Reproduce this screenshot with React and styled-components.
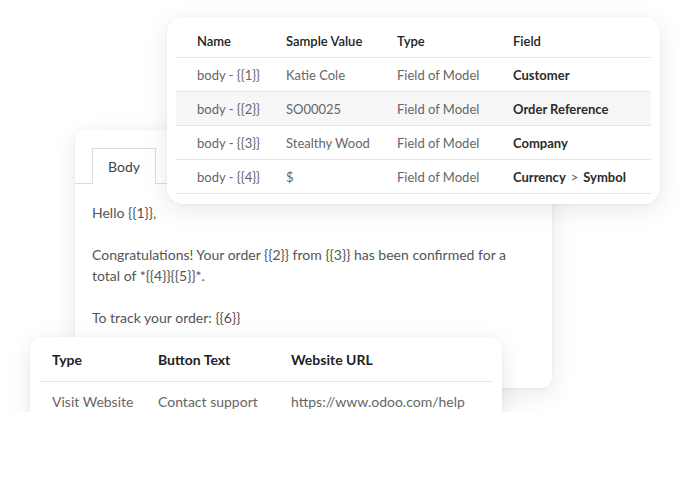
import React from 'react';
import styled, { createGlobalStyle } from 'styled-components';

const GlobalStyle = createGlobalStyle`
  html, body {
    margin: 0;
    padding: 0;
    background: #fff;
  }
  body {
    font-family: Lato, "Noto Sans", sans-serif;
    -webkit-font-smoothing: antialiased;
  }
`;

const Stage = styled.div`
  position: relative;
  width: 690px;
  height: 412px;
  overflow: hidden;
  background: #fff;
`;

const Card = styled.div`
  position: absolute;
  left: ${p => p.x}px;
  top: ${p => p.y}px;
  width: ${p => p.w}px;
  height: ${p => p.h}px;
  z-index: ${p => p.z};
  background: #fff;
  border-radius: 14px;
  box-shadow: 0 6px 26px rgba(0, 0, 0, 0.09), 0 1px 4px rgba(0, 0, 0, 0.04);
  box-sizing: border-box;
`;

const VarCard = styled(Card)`
  border-radius: 16px;
  padding: 7px 9px 10px;
`;

const BodyCard = styled(Card)`
  border-radius: 10px;
  padding: 18px 17px 0 0;
  display: flex;
  flex-direction: column;
`;

const ButtonCard = styled(Card)`
  border-radius: 12px;
  padding: 0 9px;
`;

const Table = styled.div`
  display: grid;
  grid-template-columns: ${p => p.cols};
  color: #666;
  font-size: 13px;
`;

const HeadCell = styled.div`
  box-sizing: border-box;
  height: ${p => p.h}px;
  display: flex;
  align-items: center;
  padding-left: ${p => p.pad}px;
  border-bottom: 1px solid #e6e6e6;
  color: #222;
  font-weight: ${p => p.weight};
  font-size: ${p => p.size}px;
`;

const Cell = styled.div`
  box-sizing: border-box;
  height: ${p => p.h}px;
  display: flex;
  align-items: center;
  padding-left: ${p => p.pad}px;
  border-bottom: ${p => (p.last ? 'none' : '1px solid #e6e6e6')};
  background: ${p => (p.striped ? '#f7f7f7' : 'transparent')};
  color: ${p => (p.strong ? '#2b2b2b' : '#666')};
  font-weight: ${p => (p.strong ? 700 : 400)};
  font-size: ${p => p.size}px;
  white-space: nowrap;
`;

const Chevron = styled.span`
  font-weight: 400;
  color: #555;
  margin: 0 5px;
`;

const TabBar = styled.div`
  display: flex;
  border-bottom: 1px solid #dcdcdc;
  padding-left: 17px;
`;

const Tab = styled.div`
  width: 64px;
  height: 36px;
  box-sizing: border-box;
  display: flex;
  align-items: center;
  justify-content: center;
  border: 1px solid #dcdcdc;
  border-bottom: none;
  margin-bottom: -1px;
  background: #fff;
  color: #444;
  font-size: 14px;
`;

const Message = styled.div`
  padding: 18px 0 0 17px;
  color: #555;
  font-size: 14px;
  line-height: 21px;
`;

const Para = styled.p`
  margin: 0 0 21px;
`;

const variables = [
  ['body - {{1}}', 'Katie Cole', 'Field of Model', ['Customer']],
  ['body - {{2}}', 'SO00025', 'Field of Model', ['Order Reference']],
  ['body - {{3}}', 'Stealthy Wood', 'Field of Model', ['Company']],
  ['body - {{4}}', '$', 'Field of Model', ['Currency', 'Symbol']],
];

const buttonCols = [
  ['Type', 'Visit Website', 13],
  ['Button Text', 'Contact support', 0],
  ['Website URL', 'https://www.odoo.com/help', 0],
];

function FieldPath({ parts }) {
  return parts.map((part, i) => (
    <React.Fragment key={part}>
      {i > 0 && <Chevron>&gt;</Chevron>}
      {part}
    </React.Fragment>
  ));
}

function VariablesTable() {
  return (
    <VarCard x={167} y={17} w={493} h={187} z={2}>
      <Table cols="89px 111px 116px 1fr">
        {['Name', 'Sample Value', 'Type', 'Field'].map(h => (
          <HeadCell key={h} h={34} pad={21} weight={600} size={13}>{h}</HeadCell>
        ))}
        {variables.map((row, r) => (
          <React.Fragment key={row[0]}>
            <Cell h={34} pad={21} size={13} striped={r === 1}>{row[0]}</Cell>
            <Cell h={34} pad={21} size={13} striped={r === 1}>{row[1]}</Cell>
            <Cell h={34} pad={21} size={13} striped={r === 1}>{row[2]}</Cell>
            <Cell h={34} pad={21} size={13} striped={r === 1} strong>
              <FieldPath parts={row[3]} />
            </Cell>
          </React.Fragment>
        ))}
      </Table>
    </VarCard>
  );
}

function MessageBody() {
  return (
    <BodyCard x={75} y={130} w={477} h={258} z={1}>
      <TabBar>
        <Tab>Body</Tab>
      </TabBar>
      <Message>
        <Para>Hello {'{{1}}'},</Para>
        <Para>
          Congratulations! Your order {'{{2}}'} from {'{{3}}'} has been confirmed for a
          <br />
          total of *{'{{4}}{{5}}'}*.
        </Para>
        <Para>To track your order: {'{{6}}'}</Para>
      </Message>
    </BodyCard>
  );
}

function ButtonsTable() {
  return (
    <ButtonCard x={30} y={337} w={472} h={110} z={3}>
      <Table cols="119px 133px 1fr">
        {buttonCols.map(([h, , pad]) => (
          <HeadCell key={h} h={45} pad={pad} weight={700} size={14}>{h}</HeadCell>
        ))}
        {buttonCols.map(([h, value, pad]) => (
          <Cell key={h} h={38} pad={pad} size={14} last>{value}</Cell>
        ))}
      </Table>
    </ButtonCard>
  );
}

export default function App() {
  return (
    <>
      <GlobalStyle />
      <Stage>
        <MessageBody />
        <VariablesTable />
        <ButtonsTable />
      </Stage>
    </>
  );
}
